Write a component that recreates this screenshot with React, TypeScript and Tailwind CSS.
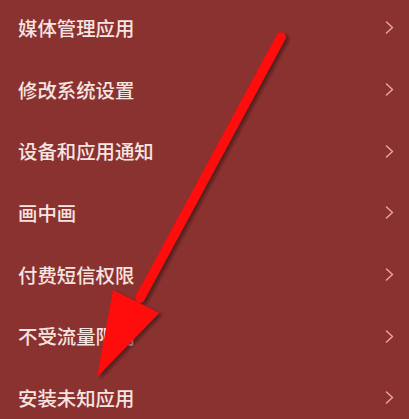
const items = [
  '媒体管理应用',
  '修改系统设置',
  '设备和应用通知',
  '画中画',
  '付费短信权限',
  '不受流量限制',
  '安装未知应用',
];

function Chevron() {
  return (
    <svg width="9" height="13" viewBox="0 0 9 13" fill="none" className="shrink-0">
      <path d="M1.5 1 L7.5 6.5 L1.5 12" stroke="#e6a59d" strokeWidth="1.5" strokeLinecap="round" strokeLinejoin="round" />
    </svg>
  );
}

function Arrow() {
  return (
    <svg className="pointer-events-none absolute inset-0" width="409" height="419" viewBox="0 0 409 419">
      <defs>
        <filter id="arrowShadow" x="-20%" y="-20%" width="140%" height="140%">
          <feDropShadow dx="3" dy="2" stdDeviation="1.6" floodColor="#2a0b0a" floodOpacity="0.6" />
        </filter>
      </defs>
      <g filter="url(#arrowShadow)">
        <line x1="281" y1="37" x2="140" y2="298" stroke="#ff0a0a" strokeWidth="9.5" strokeLinecap="round" />
        <polygon points="97,377 113,290 159,313" fill="#ff0a0a" />
      </g>
    </svg>
  );
}

export default function App() {
  return (
    <div className="relative h-[419px] w-[409px] overflow-hidden bg-[#8a3230] font-['Noto_Sans_CJK_SC',sans-serif]">
      {/* settings list */}
      <div className="-mt-[3px] flex flex-col">
        {items.map((label) => (
          <div key={label} className="flex h-[61.67px] items-center justify-between pl-[18px] pr-[15px]">
            <span className="text-[19.4px] font-medium leading-none text-[#f6e4e0]">{label}</span>
            <Chevron />
          </div>
        ))}
      </div>

      {/* annotation arrow */}
      <Arrow />
    </div>
  );
}
